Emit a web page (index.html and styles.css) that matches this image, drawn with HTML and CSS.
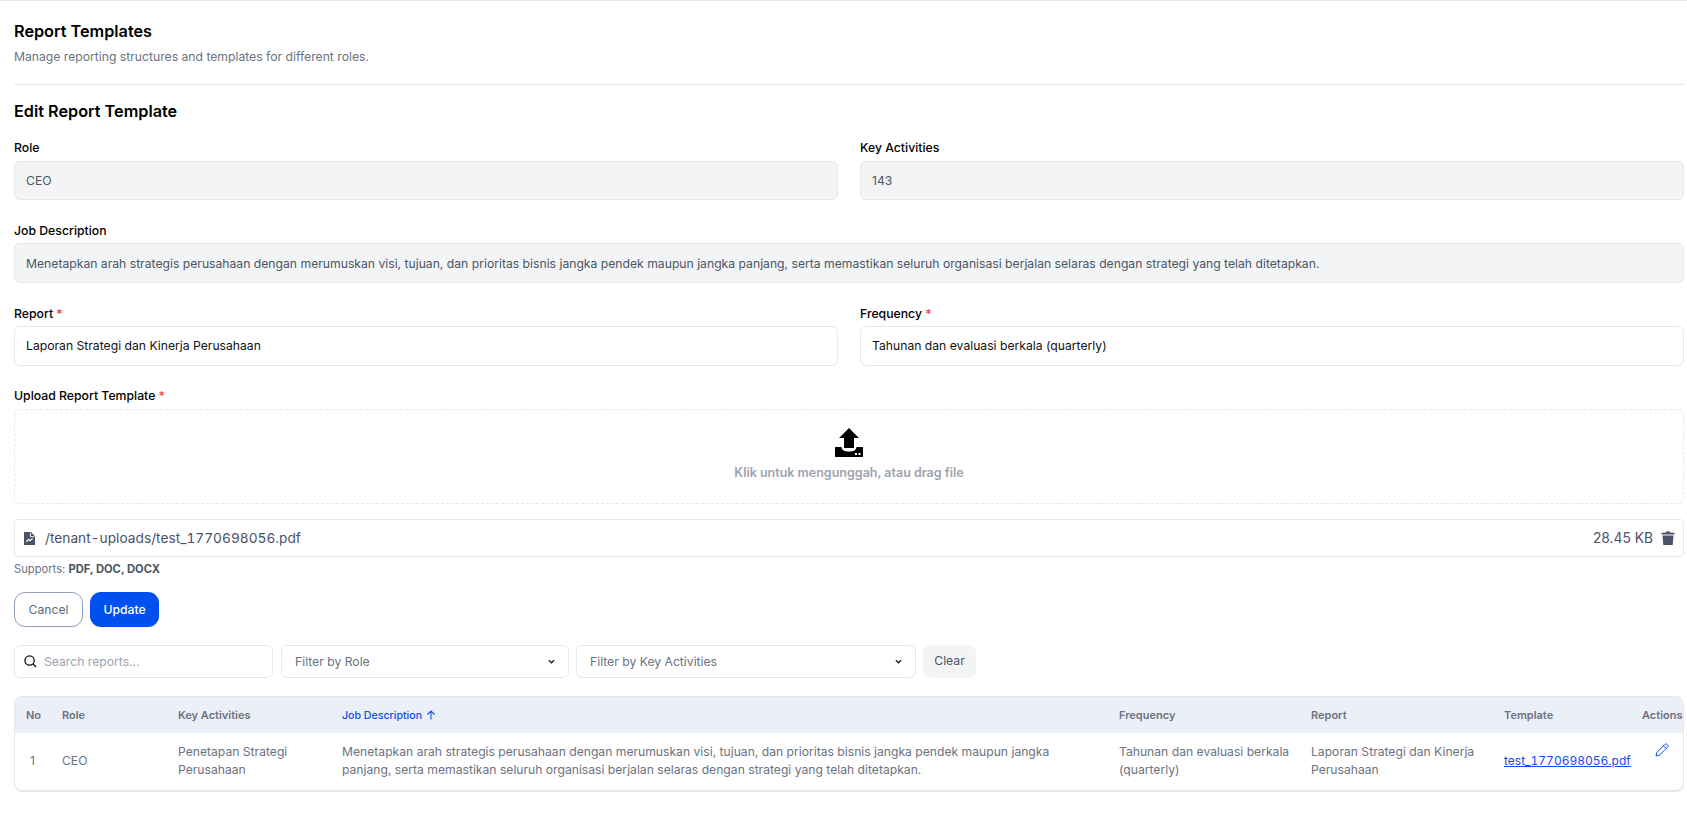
FILE: index.html
```html
<!DOCTYPE html>
<html lang="id">
<head>
<meta charset="utf-8">
<title>Report Templates</title>
<link rel="stylesheet" href="styles.css">
</head>
<body>
<main class="page">
  <header class="page-head">
    <h1>Report Templates</h1>
    <p>Manage reporting structures and templates for different roles.</p>
  </header>
  <h2>Edit Report Template</h2>
  <form class="form">
    <div class="two">
      <div class="field"><div class="label">Role</div><div class="input ro">CEO</div></div>
      <div class="field"><div class="label">Key Activities</div><div class="input ro">143</div></div>
    </div>
    <div class="field"><div class="label lower">Job Description</div><div class="input ro desc">Menetapkan arah strategis perusahaan dengan merumuskan visi, tujuan, dan prioritas bisnis jangka pendek maupun jangka panjang, serta memastikan seluruh organisasi berjalan selaras dengan strategi yang telah ditetapkan.</div></div>
    <div class="two">
      <div class="field"><div class="label lower">Report <span class="req">*</span></div><div class="input">Laporan Strategi dan Kinerja Perusahaan</div></div>
      <div class="field"><div class="label lower">Frequency <span class="req">*</span></div><div class="input">Tahunan dan evaluasi berkala (quarterly)</div></div>
    </div>
    <div class="upload">
      <div class="label">Upload Report Template <span class="req">*</span></div>
      <div class="drop">
        <svg class="drop-icon" viewBox="0 0 28 29" width="28" height="29"><path d="M14 0 24 10H19V20H9V10H4Z" fill="#000"/><path d="M0 19H6.500C7 22.500 9.500 23.500 14 23.500S21 22.500 21.500 19H28V29H0Z" fill="#000"/><rect x="20" y="25" width="2" height="2" fill="#fff"/><rect x="23.500" y="25" width="2" height="2" fill="#fff"/></svg>
        <div class="drop-text">Klik untuk mengunggah, atau drag file</div>
      </div>
      <div class="file">
        <svg class="file-icon" viewBox="0 0 12 14" width="11" height="13"><path d="M0 0H7.500L12 4.500V14H0Z" fill="#4b5268"/><path d="M7 1V5H11" fill="none" stroke="#fff" stroke-width="1"/><path d="M2.500 10.500 5 8l1.500 1.500L9.500 7" fill="none" stroke="#fff" stroke-width="1.300"/></svg>
        <span class="file-name">/tenant-uploads/test_1770698056.pdf</span>
        <span class="file-size">28.45 KB</span>
        <svg class="trash" viewBox="0 0 14 14" width="14" height="14"><path d="M0.500 1.800H4.500L5 .5H9L9.500 1.800H13.500V3.500H.5Z M1.500 4.500H12.500L11.700 14H2.300Z" fill="#4b5268"/></svg>
      </div>
      <div class="supports">Supports: <b>PDF, DOC, DOCX</b></div>
    </div>
    <div class="actions">
      <button type="button" class="btn cancel">Cancel</button>
      <button type="button" class="btn update">Update</button>
    </div>
  </form>
  <div class="filters">
    <div class="ctl search">
      <svg viewBox="0 0 14 14" width="13" height="13"><circle cx="6" cy="6" r="5" fill="none" stroke="#111" stroke-width="1.400"/><path d="M9.700 9.700 13 13" stroke="#111" stroke-width="1.400"/></svg>
      <span>Search reports...</span>
    </div>
    <div class="ctl sel role"><span>Filter by Role</span><svg viewBox="0 0 8 5" width="7" height="5"><path d="M1 1 4 4 7 1" fill="none" stroke="#222" stroke-width="1.600"/></svg></div>
    <div class="ctl sel key"><span>Filter by Key Activities</span><svg viewBox="0 0 8 5" width="7" height="5"><path d="M1 1 4 4 7 1" fill="none" stroke="#222" stroke-width="1.600"/></svg></div>
    <button type="button" class="clear">Clear</button>
  </div>
  <div class="table-wrap">
    <table>
      <colgroup><col class="c1"><col class="c2"><col class="c3"><col class="c4"><col class="c5"><col class="c6"><col class="c7"><col class="c8"></colgroup>
      <thead>
        <tr>
          <th>No</th><th>Role</th><th>Key Activities</th>
          <th class="sorted">Job Description <svg viewBox="0 0 10 10" width="10" height="10"><path d="M5 9.500V1M1.500 4.500 5 1 8.500 4.500" fill="none" stroke="#0b50f0" stroke-width="1.100"/></svg></th>
          <th>Frequency</th><th>Report</th><th>Template</th><th class="act">Actions</th>
        </tr>
      </thead>
      <tbody>
        <tr>
          <td class="no">1</td><td>CEO</td><td>Penetapan Strategi Perusahaan</td>
          <td>Menetapkan arah strategis perusahaan dengan merumuskan visi, tujuan, dan prioritas bisnis jangka pendek maupun jangka panjang, serta memastikan seluruh organisasi berjalan selaras dengan strategi yang telah ditetapkan.</td>
          <td class="freq">Tahunan dan evaluasi berkala (quarterly)</td>
          <td>Laporan Strategi dan Kinerja Perusahaan</td>
          <td><a href="#">test_1770698056.pdf</a></td>
          <td class="edit"><svg viewBox="0 0 14 14" width="14" height="14"><path d="M1 13 1.800 9.500 9.800 1.500C10.500.8 11.500.8 12.200 1.500L12.500 1.800C13.200 2.500 13.200 3.500 12.500 4.200L4.500 12.200ZM8.500 2.800 11.200 5.500" fill="none" stroke="#0b50f0" stroke-width="1"/></svg></td>
        </tr>
      </tbody>
    </table>
  </div>
</main>
</body>
</html>
```
FILE: styles.css
```css
* { box-sizing: border-box; }
html, body { margin: 0; padding: 0; }
body {
  background: #fff;
  color: #000;
  font-family: Inter, "Liberation Sans", sans-serif;
  font-size: 12.18px;
  border-top: 1px solid #e5e7eb;
}
.page { padding: 0 3px 0 14px; }
.page-head { height: 84px; padding-top: 20px; border-bottom: 1px solid #e5e7eb; }
h1, h2 { margin: 0; font-size: 16.24px; line-height: 20px; font-weight: 600; }
.page-head p { margin: 8px 0 0; font-size: 12.18px; line-height: 16px; color: #6b7280; }
h2 { margin-top: 16px; }
.form { margin-top: 19px; display: flex; flex-direction: column; }
.two { display: grid; grid-template-columns: 1fr 1fr; column-gap: 22px; }
.field { margin-bottom: 22px; }
.label { font-size: 12.25px; line-height: 16px; font-weight: 500; margin-bottom: 5px; }
.label.lower { padding-top: 1px; margin-bottom: 4px; height: 17px; }
.req { color: #ef4444; }
.input {
  height: 40px; padding: 0 11px 1px; display: flex; align-items: center;
  border: 1px solid #e5e7eb; border-radius: 6px; font-size: 12.18px; color: #111;
}
.ro { background: #f3f4f6; color: #4b5563; height: 39px; padding-bottom: 0; }
.desc { height: 40px; }
.drop {
  height: 95px; border: 1px dashed #e5e7eb; border-radius: 6px;
  display: flex; flex-direction: column; align-items: center; padding-top: 18px;
}
.drop-text { margin-top: 8px; font-size: 12.5px; line-height: 16px; font-weight: 600; color: #9ca3af; }
.file {
  height: 38px; margin-top: 15px; padding: 0 8px 0 9px; display: flex; align-items: center; gap: 10px;
  border: 1px solid #e5e7eb; border-radius: 4px; color: #4b5268;
}
.file-name { flex: 1; font-size: 13.72px; font-variant-numeric: tabular-nums; }
.file-size { font-size: 13.8px; margin-right: -2px; }
.supports { margin-top: 5px; font-size: 11.2px; line-height: 14px; color: #6b7280; }
.supports b { font-weight: 700; color: #4b5563; }
.actions { display: flex; gap: 7px; margin-top: 16px; }
.btn { width: 69px; height: 35px; border-radius: 11px; font: 400 12.18px Inter, sans-serif; padding: 0; }
.cancel { background: #fff; border: 1px solid #8fa0b5; color: #5b6b80; }
.update { background: #0050ef; border: 0; color: #fff; font-weight: 500; }
.filters { display: flex; gap: 8px; margin-top: 18px; height: 33px; }
.ctl {
  display: flex; align-items: center; height: 33px; border: 1px solid #e5e7eb; border-radius: 6px;
  font-size: 12.18px; color: #6b7280;
}
.search { width: 259px; padding-left: 9px; gap: 7px; color: #9ca3af; }
.sel { justify-content: space-between; padding: 0 13px; }
.role { width: 288px; }
.key { width: 340px; margin-left: -1px; }
.clear { width: 53px; height: 33px; border: 0; border-radius: 8px; background: #f3f4f6; color: #4b5563; font: 400 12.18px Inter, sans-serif; padding: 0 0 2px; margin-left: -1px; }
.table-wrap {
  margin-top: 18px; border: 1px solid #e5e7eb; border-bottom-width: 2px; border-radius: 8px; overflow: hidden;
}
table { width: 100%; table-layout: fixed; border-collapse: collapse; }
.c1 { width: 36px; } .c2 { width: 116px; } .c3 { width: 164px; } .c4 { width: 777px; }
.c5 { width: 192px; } .c6 { width: 193px; } .c7 { width: 137px; } .c8 { width: 54px; }
th {
  height: 36px; background: #ebeff7; text-align: left; padding: 0 0 0 11px;
  font-size: 11px; font-weight: 600; color: #6b7280; white-space: nowrap;
}
th.sorted { color: #0b50f0; font-weight: 500; font-size: 10.6px; }
th.sorted svg { margin-left: 1px; vertical-align: -1px; }
th.act { padding-left: 12px; }
td { padding: 10px 12px 11px 11px; font-size: 12.15px; line-height: 18px; color: #6b7280; vertical-align: middle; }
td.no { padding-left: 15px; }
td.freq { padding-right: 6px; }
td a { color: #0b50f0; font-size: 12px; font-variant-numeric: tabular-nums; }
td.edit { vertical-align: top; padding-left: 25px; padding-top: 10px; }
```
